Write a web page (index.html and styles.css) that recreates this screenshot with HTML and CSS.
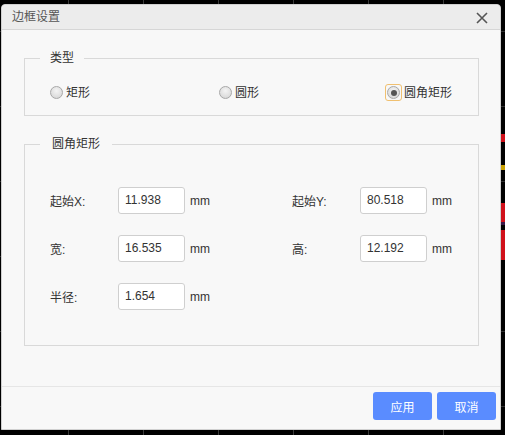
FILE: index.html
```html
<!DOCTYPE html>
<html lang="zh">
<head>
<meta charset="utf-8">
<title>边框设置</title>
<link rel="stylesheet" href="styles.css">
</head>
<body>
<div class="canvas">
  <div class="trace t1"></div>
  <div class="trace t2"></div>
  <div class="trace t3"></div>
  <div class="trace t4"></div>
  <div class="trace t5"></div>
</div>
<div class="dialog">
  <div class="titlebar">
    <span class="title">边框设置</span>
    <svg class="close" width="12" height="12" viewBox="0 0 12 12"><path d="M1 1 L11 11 M11 1 L1 11" stroke="#555" stroke-width="1.6" fill="none"/></svg>
  </div>
  <div class="body">
    <fieldset class="group">
      <legend class="legend">类型</legend>
      <div class="radios">
        <label class="radio"><span class="dot"></span>矩形</label>
        <label class="radio"><span class="dot"></span>圆形</label>
        <label class="radio"><span class="focus"><span class="dot checked"></span></span>圆角矩形</label>
      </div>
    </fieldset>
    <fieldset class="group group2">
      <legend class="legend legend2">圆角矩形</legend>
      <div class="fields">
        <div class="field"><span class="lbl">起始X:</span><span class="input">11.938</span><span class="unit">mm</span></div>
        <div class="field"><span class="lbl">起始Y:</span><span class="input">80.518</span><span class="unit">mm</span></div>
        <div class="field"><span class="lbl">宽:</span><span class="input">16.535</span><span class="unit">mm</span></div>
        <div class="field"><span class="lbl">高:</span><span class="input">12.192</span><span class="unit">mm</span></div>
        <div class="field"><span class="lbl">半径:</span><span class="input">1.654</span><span class="unit">mm</span></div>
      </div>
    </fieldset>
  </div>
  <div class="footer">
    <button class="btn">应用</button>
    <button class="btn">取消</button>
  </div>
</div>
</body>
</html>
```
FILE: styles.css
```css
* { box-sizing: border-box; }
html, body { margin: 0; padding: 0; }
body {
  width: 505px;
  height: 435px;
  overflow: hidden;
  position: relative;
  background-color: #000;
  background-image:
    linear-gradient(to right, #3a3a3a 1px, transparent 1px),
    linear-gradient(to bottom, #2e2e2e 1px, transparent 1px);
  background-size: 75px 75px;
  background-position: 68px 31px;
  font-family: "Liberation Sans", "Noto Sans CJK SC", sans-serif;
  font-size: 12px;
  color: #333;
  padding-top: 4px;
  padding-left: 1px;
}
.canvas { position: absolute; inset: 0; }
.trace { position: absolute; left: 501px; width: 4px; }
.t1 { top: 134px; height: 8px; background: #d0101a; }
.t2 { top: 165px; height: 5px; background: #c8a000; }
.t3 { top: 203px; height: 19px; background: #d0101a; }
.t4 { top: 222px; height: 3px; background: #3a1848; }
.t5 { top: 230px; height: 30px; background: #d0101a; }

.dialog {
  position: relative;
  width: 500px;
  height: 426px;
  background: #f8f8f8;
  border: 1px solid #d0d0d0;
  border-radius: 4px 4px 0 0;
  display: flex;
  flex-direction: column;
}
.titlebar {
  height: 25px;
  flex: none;
  background: #ececec;
  border-bottom: 1px solid #d6d6d6;
  border-radius: 4px 4px 0 0;
  display: flex;
  align-items: center;
  justify-content: space-between;
  padding: 0 12px 0 10px;
}
.title { font-size: 12px; color: #555; line-height: 16px; }
.close { display: block; margin-top: 1px; }

.body { flex: 1; padding: 20px 0 0 22px; }
.group {
  margin: 0;
  width: 455px;
  border: 1px solid #d9d9d9;
  padding: 18px 0 15px 25px;
  min-inline-size: 0;
}
.legend {
  padding: 0 10px;
  margin-left: -10px;
  line-height: 16px;
  color: #333;
}
.group2 { margin-top: 20px; padding: 35px 0 35px 25px; }
.legend2 { padding: 0 12px 0 12px; margin-left: -10px; }

.radios { display: grid; grid-template-columns: 169px 168px auto; height: 16px; }
.radio { display: flex; align-items: center; line-height: 16px; color: #333; }
.dot {
  width: 13px; height: 13px;
  border-radius: 50%;
  border: 1px solid #a8a8a8;
  background: radial-gradient(circle at 50% 35%, #f4f4f4 0, #dcdcdc 70%, #cfcfcf 100%);
  margin-right: 3px;
  position: relative;
}
.dot.checked { margin-right: 0; }
.dot.checked::after {
  content: "";
  position: absolute;
  left: 2.5px; top: 2.5px;
  width: 6px; height: 6px;
  border-radius: 50%;
  background: #555;
}
.focus {
  display: flex;
  padding: 1px;
  border: 1px solid #f0c070;
  border-radius: 3px;
  margin: 0 2px 0 -2px;
}

.fields {
  display: grid;
  grid-template-columns: 242px 200px;
  row-gap: 21px;
}
.field { display: flex; align-items: center; height: 27px; }
.lbl { width: 68px; color: #333; }
.input {
  width: 67px; height: 27px;
  background: #fff;
  border: 1px solid #cfcfcf;
  border-radius: 3px;
  padding-left: 6px;
  line-height: 25px;
  color: #333;
}
.unit { margin-left: 5px; color: #333; }

.footer {
  flex: none;
  height: 43px;
  border-top: 1px solid #e6e6e6;
  display: flex;
  justify-content: flex-end;
  gap: 5px;
  padding: 5px 4px 0 0;
}
.btn {
  width: 59px; height: 28px;
  border: none;
  border-radius: 3px;
  background: #5a8cff;
  color: #fff;
  font-family: "Noto Sans CJK SC", sans-serif;
  font-size: 12px;
  padding: 0;
}
```
